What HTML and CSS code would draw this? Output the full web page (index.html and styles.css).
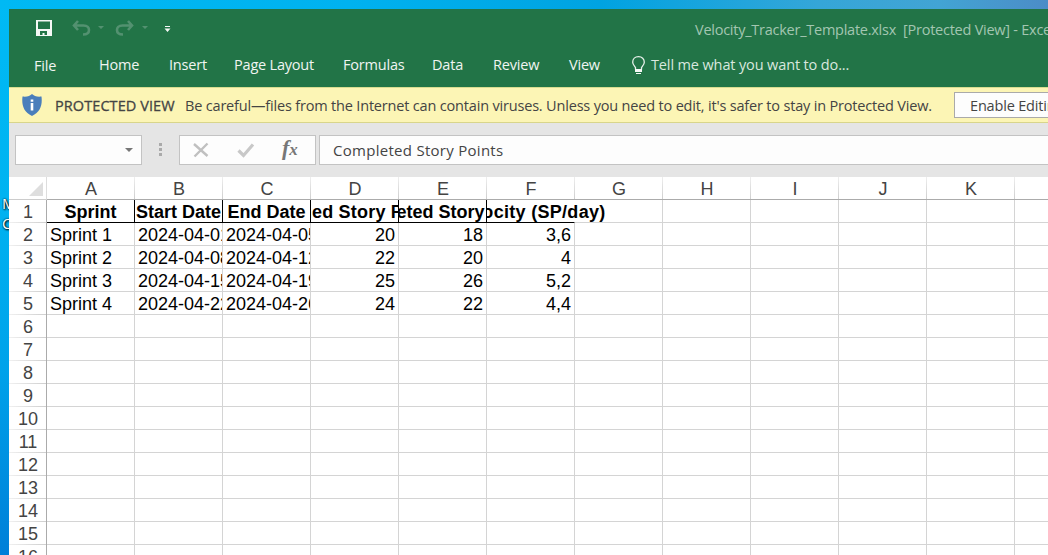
FILE: index.html
```html
<!DOCTYPE html>
<html lang="en">
<head>
<meta charset="utf-8">
<title>Velocity_Tracker_Template.xlsx</title>
<link rel="stylesheet" href="styles.css">
</head>
<body>
<div class="desktop">
  <div class="desktop-label"><span>M</span><span>C</span></div>
  <main class="window">
    <header class="ribbon">
      <div class="titlebar">
        <svg class="quick" width="150" height="24" viewBox="0 0 150 24">
          <path class="ink" fill-rule="evenodd" d="M0 2H16V18H0ZM2 3.500V11H14V3.500ZM4 13V17H6.500V15H8.500V17H11V13Z"/>
          <g class="dim-line">
            <path d="M42 3L38 7.500L42 12M38.500 7.500H47.500C51.500 7.500 53 10 53 12C53 15 50.500 16.500 47 16.500"/>
            <path d="M92 3L96 7.500L92 12M95.500 7.500H86.500C82.500 7.500 81 10 81 12C81 15 83.500 16.500 87 16.500"/>
          </g>
          <path class="dim" d="M62 8H68L65 11ZM106 8H112L109 11Z"/>
          <path class="ink" d="M129 8H134V9H129ZM128.500 10.500H134.500L131.500 14Z"/>
        </svg>
        <span class="title">Velocity_Tracker_Template.xlsx&nbsp; [Protected View] - Excel</span>
      </div>
      <nav class="tabs">
        <span class="tab file">File</span>
        <span class="tab home">Home</span>
        <span class="tab insert">Insert</span>
        <span class="tab layout">Page Layout</span>
        <span class="tab formulas">Formulas</span>
        <span class="tab data">Data</span>
        <span class="tab review">Review</span>
        <span class="tab view">View</span>
        <svg class="bulb" width="13" height="19" viewBox="0 0 13 19"><path class="bulb-line" d="M3.500 13.500V11.500C2.500 10 .7 8.500 .7 6.200C.7 3 3 .7 6.500 .7S12.300 3 12.300 6.200C12.300 8.500 10.500 10 9.500 11.500V13.500"/><path class="ink" d="M3 13H10V16H3ZM4 17H9V18H4Z"/></svg>
        <span class="tab tell">Tell me what you want to do...</span>
      </nav>
    </header>
    <section class="notice">
      <svg class="shield" width="20" height="22" viewBox="0 0 20 22"><path fill="#4a7ebb" d="M10 0C12 2 15 3 19.500 2.500C20.500 11 18.500 18 10 22C1.500 18-.5 11 .5 2.500C5 3 8 2 10 0Z"/><path fill="#fff" d="M8.700 5.500H11.300V7.700H8.700ZM8.700 9H11.300V16.500H8.700Z"/></svg>
      <span class="notice-title">PROTECTED VIEW</span>
      <span class="notice-text">Be careful—files from the Internet can contain viruses. Unless you need to edit, it's safer to stay in Protected View.</span>
      <button class="enable"><span>Enable Editing</span></button>
    </section>
    <section class="formula-bar">
      <div class="name-box"><svg width="8" height="4" viewBox="0 0 8 4"><path fill="#777" d="M0 0H8L4 4Z"/></svg></div>
      <svg class="grip" width="3" height="14" viewBox="0 0 3 14"><path fill="#aaa" d="M0 0H3V3H0ZM0 5H3V8H0ZM0 10H3V13H0Z"/></svg>
      <div class="actions">
        <svg width="16" height="16" viewBox="0 0 16 16"><path fill="none" stroke="#c0c0c0" stroke-width="2.400" d="M1 2L14.500 14M14.500 1.500L1.500 14.500"/></svg>
        <svg width="18" height="15" viewBox="0 0 18 15"><path fill="none" stroke="#c8c8c8" stroke-width="3.200" d="M1.500 7.500L6.500 12.500L16 1.500"/></svg>
        <span class="fx">f<small>x</small></span>
      </div>
      <div class="formula">Completed Story Points</div>
    </section>
    <section class="sheet" id="sheet"></section>
  </main>
</div>
<script src="sheet.js"></script>
</body>
</html>
```
FILE: styles.css
```css
* { box-sizing: border-box; }
body { margin: 0; overflow: hidden; font-family: "Open Sans", "Noto Sans", sans-serif; }
.desktop {
  position: relative;
  width: 1048px;
  height: 555px;
  padding: 9px 0 0 9px;
  overflow: hidden;
  background:
    linear-gradient(90deg, #00b9f4 0, #00b2ef 350px, #00a3e1 600px, #35a6d8 820px, #42a4d4 940px, #4c8cc7 1048px) 0 0 / 100% 9px no-repeat,
    linear-gradient(#00baf5 0, #00b3f1 200px, #00a2ea 370px, #007fd8 555px);
}
.desktop-label {
  position: absolute;
  left: 2px;
  top: 193px;
  width: 7px;
  overflow: hidden;
  display: grid;
  font-size: 15px;
  line-height: 20px;
  color: #fff;
  text-shadow: 0 0 2px #000, 1px 1px 2px #000;
}
.window { display: flex; flex-direction: column; width: 1039px; height: 546px; overflow: hidden; background: #e5e5e5; }
.ribbon { height: 78px; flex: none; background: #227447; color: #f0f5f2; }
.titlebar { display: flex; height: 41px; padding-left: 27px; }
.quick { flex: none; margin-top: 9px; }
.ink { fill: #f5f8f6; }
.dim { fill: #539170; }
.dim-line { fill: none; stroke: #539170; stroke-width: 2.6; }
.title { margin-left: 509px; line-height: 41px; font-size: 14.500px; letter-spacing: -0.250px; white-space: nowrap; color: #a3c6b1; }
.tabs { display: flex; height: 37px; padding-left: 25px; white-space: nowrap; font-size: 14.500px; line-height: 30px; letter-spacing: -0.200px; }
.tab { flex: none; }
.file { width: 65px; line-height: 32px; }
.home { width: 70px; }
.insert { width: 65px; }
.layout { width: 109px; }
.formulas { width: 89px; }
.data { width: 61px; }
.review { width: 76px; }
.view { width: 63px; }
.bulb { flex: none; margin: 6px 6px 0 0; }
.bulb-line { fill: none; stroke: #e8f1eb; stroke-width: 1.300; }
.tell { color: #d9e8df; letter-spacing: -0.130px; }
.notice {
  display: flex;
  align-items: center;
  flex: none;
  height: 36px;
  padding-left: 13px;
  background: #fcf5b5;
  border-top: 1px solid #d8dc90;
  border-bottom: 1px solid #d8d58b;
  font-size: 14.500px;
  color: #444;
  white-space: nowrap;
}
.shield { flex: none; margin-right: 13px; }
.notice-title { flex: none; width: 130px; letter-spacing: 0.080px; -webkit-text-stroke: 0.300px #444; }
.notice-text { flex: none; width: 769px; letter-spacing: -0.180px; }
.enable { flex: none; width: 125px; height: 26px; padding: 0 0 0 15px; border: 1px solid #aaa; background: #fdfdfd; color: #444; font: inherit; text-align: left; letter-spacing: -0.180px; }
.formula-bar { display: flex; flex: none; height: 54px; padding: 12px 0 12px 6px; }
.name-box { display: flex; align-items: center; justify-content: flex-end; width: 127px; padding-right: 8px; border: 1px solid #c3c3c3; background: #fdfdfd; }
.grip { margin: 8px 17px 0 17px; }
.actions { display: flex; align-items: center; width: 137px; padding-left: 13px; gap: 28px; border: 1px solid #c3c3c3; background: #fdfdfd; }
.fx { font: italic bold 22px/22px "Liberation Serif", serif; color: #777; margin: -3px 0 0 -1px; }
.fx small { font-size: 17px; }
.formula { flex: 1; margin-left: 3px; padding-left: 13px; border: 1px solid #c3c3c3; border-right: 0; background: #fdfdfd; font-size: 15px; line-height: 28px; letter-spacing: 0.280px; color: #444; }
.sheet {
  display: grid;
  flex: none;
  grid-template-columns: 38px repeat(12, 88px);
  grid-template-rows: 23px repeat(16, 23px);
  background: #fff;
  font: 18px/24px "Liberation Sans", sans-serif;
  color: #000;
}
.cell, .col, .row, .corner { min-width: 0; height: 23px; white-space: nowrap; }
.cell { padding: 0 3px; border-right: 1px solid #d4d4d4; border-bottom: 1px solid #d4d4d4; overflow: hidden; }
.number { text-align: right; }
.head { display: flex; justify-content: center; padding: 0; font-weight: bold; border-color: #000; }
.long { letter-spacing: 0.200px; }
.spill { overflow: visible; clip-path: inset(0 -88px 0 0); border-right-color: transparent; letter-spacing: 0.300px; }
.col { text-align: center; color: #444; border-bottom: 1px solid #ababab; background: linear-gradient(#eee, #cfcfcf) right / 1px 100% no-repeat; }
.row { padding-left: 1px; text-align: center; color: #444; border-right: 1px solid #ababab; background: linear-gradient(90deg, #f0f0f0, #cfcfcf) bottom / 100% 1px no-repeat; }
.corner { display: flex; justify-content: flex-end; padding: 5px 3px 0 0; border-bottom: 1px solid #ccc; border-right: 1px solid #ddd; }
```
FILE: sheet.js
```js
const columns = "ABCDEFGHIJKL".split("");
const headings = ["Sprint", "Start Date", "End Date", "Planned Story Points", "Completed Story Points", "Velocity (SP/day)"];
const headingStyles = ["", "", "", " long", "", " spill"];
const records = [
  ["Sprint 1", "2024-04-01", "2024-04-05", "20", "18", "3,6"],
  ["Sprint 2", "2024-04-08", "2024-04-12", "22", "20", "4"],
  ["Sprint 3", "2024-04-15", "2024-04-19", "25", "26", "5,2"],
  ["Sprint 4", "2024-04-22", "2024-04-26", "24", "22", "4,4"]
];
let html = '<div class="corner"><svg width="14" height="14" viewBox="0 0 14 14"><path fill="#dedede" d="M14 0V14H0Z"/></svg></div>';
html += columns.map(name => `<div class="col">${name}</div>`).join("");
for (let row = 1; row <= 16; row++) {
  html += `<div class="row">${row}</div>`;
  columns.forEach((name, i) => {
    if (row === 1 && i < 6) {
      html += `<div class="cell head${headingStyles[i]}"><span>${headings[i]}</span></div>`;
    } else {
      const value = (row > 1 && records[row - 2] && records[row - 2][i]) || "";
      html += `<div class="cell${i > 2 ? " number" : ""}">${value}</div>`;
    }
  });
}
document.getElementById("sheet").innerHTML = html;
```
